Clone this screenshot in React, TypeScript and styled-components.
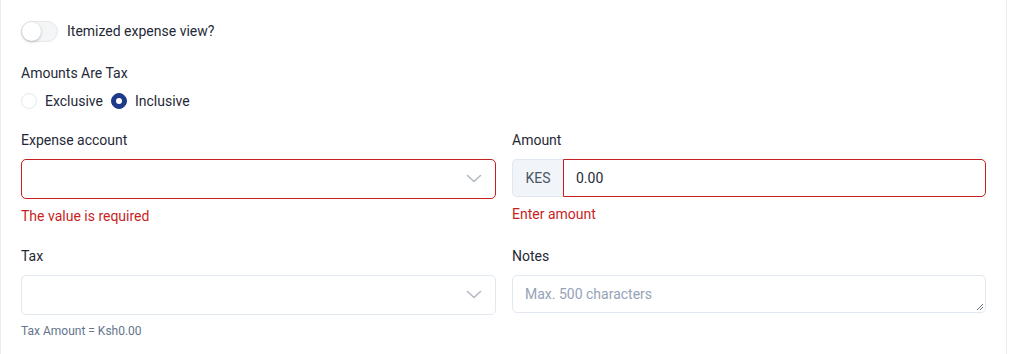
import React from "react";
import styled, { createGlobalStyle } from "styled-components";

const Global = createGlobalStyle`
  html, body { margin: 0; padding: 0; background: #ffffff; }
  body { font-family: Roboto, "Liberation Sans", sans-serif; color: #1f2937; }
  * { box-sizing: border-box; }
`;

const Panel = styled.div`
  width: 1007px;
  min-height: 354px;
  border-left: 1px solid #e9edf3;
  border-right: 1px solid #e9edf3;
  padding: 20px 20px 0 20px;
  display: flex;
  flex-direction: column;
`;

const ToggleRow = styled.label`
  display: flex;
  align-items: center;
  gap: 9px;
  height: 22px;
  font-size: 14px;
  color: #1f2937;
`;

const Track = styled.span`
  position: relative;
  width: 37px;
  height: 21px;
  border-radius: 11px;
  background: #f4f5f7;
  border: 1px solid #e5e7eb;
  display: inline-block;
`;

const Knob = styled.span`
  position: absolute;
  left: 0px;
  top: 0px;
  width: 19px;
  height: 19px;
  border-radius: 50%;
  background: #ffffff;
  box-shadow: 0 1px 3px rgba(0, 0, 0, 0.25);
`;

const GroupLabel = styled.div`
  margin-top: 21px;
  font-size: 14px;
  line-height: 20px;
  color: #1f2937;
`;

const RadioRow = styled.div`
  margin-top: 8px;
  display: flex;
  align-items: center;
  height: 20px;
  font-size: 14px;
`;

const RadioOption = styled.label`
  display: flex;
  align-items: center;
  gap: 8px;
  margin-right: 8px;
  color: #1f2937;
`;

const RadioCircle = styled.span<{ $checked?: boolean }>`
  width: 16px;
  height: 16px;
  border-radius: 50%;
  display: inline-flex;
  align-items: center;
  justify-content: center;
  background: ${(p) => (p.$checked ? "#1e3a8a" : "#ffffff")};
  border: 1px solid ${(p) => (p.$checked ? "#1e3a8a" : "#e2e8f0")};
  &::after {
    content: "";
    width: 6px;
    height: 6px;
    border-radius: 50%;
    background: ${(p) => (p.$checked ? "#ffffff" : "transparent")};
  }
`;

const Grid = styled.div`
  margin-top: 19px;
  display: grid;
  grid-template-columns: 475px 474px;
  column-gap: 16px;
  row-gap: 20px;
`;

const Field = styled.div`
  display: flex;
  flex-direction: column;
`;

const Label = styled.div`
  font-size: 14px;
  line-height: 20px;
  color: #1f2937;
  margin-bottom: 9px;
`;

const SelectBox = styled.div<{ $error?: boolean }>`
  height: 40px;
  border-radius: 5px;
  border: 1px solid ${(p) => (p.$error ? "#c81e1e" : "#e2e8f0")};
  display: flex;
  align-items: center;
  justify-content: flex-end;
  padding-right: 13px;
  background: #fff;
`;

const InputGroup = styled.div`
  height: 38px;
  display: flex;
`;

const Addon = styled.div`
  width: 51px;
  background: #f1f4f9;
  border: 1px solid #e2e8f0;
  border-right: none;
  border-radius: 5px 0 0 5px;
  display: flex;
  align-items: center;
  justify-content: center;
  font-size: 14px;
  color: #4b5563;
`;

const AmountInput = styled.div`
  flex: 1;
  border: 1px solid #c81e1e;
  border-radius: 0 5px 5px 0;
  display: flex;
  align-items: center;
  padding-left: 12px;
  font-size: 14px;
  color: #1f2937;
`;

const ErrorText = styled.div`
  margin-top: 7px;
  font-size: 14px;
  line-height: 20px;
  color: #c81e1e;
`;

const HelpText = styled.div`
  margin-top: 8px;
  font-size: 12px;
  line-height: 16px;
  color: #64748b;
`;

const TextArea = styled.div`
  position: relative;
  height: 38px;
  border: 1px solid #e2e8f0;
  border-radius: 5px;
  padding: 8px 12px;
  font-size: 14px;
  line-height: 20px;
  color: #94a3b8;
`;

const Grip = styled.svg`
  position: absolute;
  right: 1px;
  bottom: 1px;
`;

const Chevron = () => (
  <svg width="16" height="10" viewBox="0 0 16 10" fill="none">
    <path d="M1.5 1.5 L8 7.5 L14.5 1.5" stroke="#b4b9c2" strokeWidth="1.6" strokeLinecap="round" strokeLinejoin="round" />
  </svg>
);

export default function App() {
  return (
    <>
      <Global />
      <Panel>
        <ToggleRow>
          <Track>
            <Knob />
          </Track>
          Itemized expense view?
        </ToggleRow>
        <GroupLabel>Amounts Are Tax</GroupLabel>
        <RadioRow>
          <RadioOption>
            <RadioCircle />
            Exclusive
          </RadioOption>
          <RadioOption>
            <RadioCircle $checked />
            Inclusive
          </RadioOption>
        </RadioRow>
        <Grid>
          <Field>
            <Label>Expense account</Label>
            <SelectBox $error>
              <Chevron />
            </SelectBox>
            <ErrorText>The value is required</ErrorText>
          </Field>
          <Field>
            <Label>Amount</Label>
            <InputGroup>
              <Addon>KES</Addon>
              <AmountInput>0.00</AmountInput>
            </InputGroup>
            <ErrorText>Enter amount</ErrorText>
          </Field>
          <Field>
            <Label>Tax</Label>
            <SelectBox>
              <Chevron />
            </SelectBox>
            <HelpText>Tax Amount = Ksh0.00</HelpText>
          </Field>
          <Field>
            <Label>Notes</Label>
            <TextArea>
              Max. 500 characters
              <Grip width="9" height="9" viewBox="0 0 9 9">
                <path d="M8 2 L2 8 M8 5 L5 8" stroke="#6b7280" strokeWidth="1" />
              </Grip>
            </TextArea>
          </Field>
        </Grid>
      </Panel>
    </>
  );
}
